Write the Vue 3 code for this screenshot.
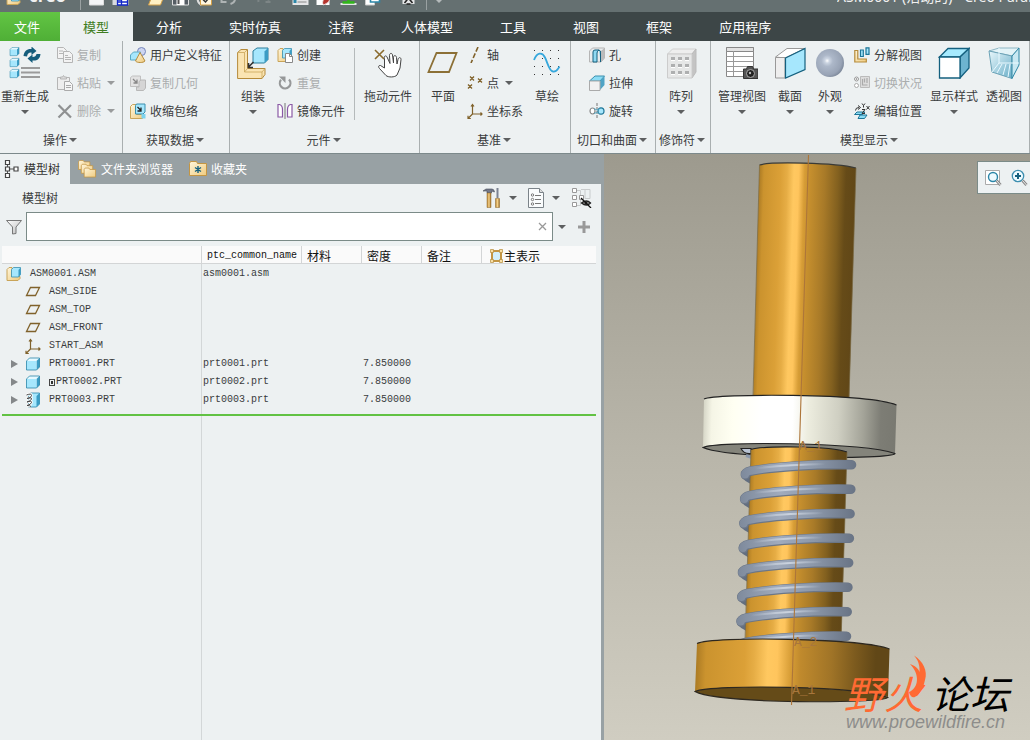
<template>
  <div class="app">
    <!-- 图标库 -->
    <svg class="defs" width="0" height="0" aria-hidden="true">
      <defs>
        <linearGradient id="tan" x1="0" y1="0" x2="1" y2="1">
          <stop offset="0" stop-color="#fff6dc" /><stop offset="1" stop-color="#efcb7f" />
        </linearGradient>
        <linearGradient id="metal" x1="0" y1="0" x2="1" y2="1">
          <stop offset="0" stop-color="#fff" /><stop offset="1" stop-color="#bbb" />
        </linearGradient>
        <linearGradient id="wood" x1="0" x2="1">
          <stop offset="0" stop-color="#b98632" /><stop offset=".5" stop-color="#f3d08b" /><stop offset="1" stop-color="#9a6a20" />
        </linearGradient>
        <radialGradient id="ball" cx=".4" cy=".42" r=".68">
          <stop offset="0" stop-color="#fff" /><stop offset=".12" stop-color="#ccd5e2" />
          <stop offset=".3" stop-color="#adb8c9" /><stop offset=".75" stop-color="#98a3b5" /><stop offset="1" stop-color="#6f7b8d" />
        </radialGradient>
        <linearGradient id="glass" x1="0" y1="0" x2="1" y2="1">
          <stop offset="0" stop-color="#e8f7fb" /><stop offset="1" stop-color="#6aaec8" />
        </linearGradient>
      </defs>

      <symbol id="cube" viewBox="0 0 16 16">
        <path d="M1.500 5l3-3h10l-3 3z" fill="#e6f9ff" /><path d="M11.500 5l3-3v9l-3 3z" fill="#3a9cc4" />
        <path d="M1.500 5h10v9h-10z" fill="#a6e7fd" />
        <path d="M1.500 5l3-3h10v9l-3 3h-10z" fill="none" stroke="#2b86a8" stroke-width=".8" />
      </symbol>
      <symbol id="asm" viewBox="0 0 16 16">
        <path d="M1 3.500L3 1.500h3v9h8v2l-2 2H1z" fill="url(#tan)" stroke="#c9a459" />
        <path d="M5.500 3.500l2-2h7v7l-2 2.500h-7z" fill="#a6e7fd" stroke="#3a8fae" stroke-width=".8" /><path d="M12.500 4l2-2.500v7l-2 2.500z" fill="#3a9cc4" />
      </symbol>
      <symbol id="plane-s" viewBox="0 0 16 16">
        <path d="M5.500 3.500H14.500L10.500 11.500H1.500z" fill="none" stroke="#80622b" stroke-width="1.300" />
      </symbol>
      <symbol id="csys" viewBox="0 0 16 16">
        <path d="M5.500 11V1.500M5.500 11H15M5.500 11L1 15.500M4 3.500l1.500-2L7 3.500M13.500 9.500l1.500 1.500-1.500 1.500M1 12.800v2.700h2.800" fill="none" stroke="#80622b" stroke-width="1.200" />
      </symbol>
      <symbol id="spring" viewBox="0 0 16 16">
        <path d="M3.500 3l2-2h9v11l-3 3h-8z" fill="#a6e7fd" stroke="#2b86a8" stroke-width=".8" /><path d="M11.500 4l3-3v11l-3 3z" fill="#3a9cc4" />
        <path d="M1.500 3q5-2 5 .500T2 6.500M2 6.500q5-1.500 4.500.5T2 10M2 10q5-1.500 4.500.5T2 13.500q3 0 4 1" fill="none" stroke="#fff" stroke-width="2.600" />
        <path d="M1.500 3q5-2 5 .500T2 6.500M2 6.500q5-1.500 4.500.5T2 10M2 10q5-1.500 4.500.5T2 13.500q3 0 4 1" fill="none" stroke="#444" />
      </symbol>

      <!-- 大图标 -->
      <symbol id="regen" viewBox="0 0 32 32">
        <use href="#cube" x="0" y="-1" width="11" height="11" /><use href="#cube" x="0" y="10" width="11" height="11" />
        <use href="#cube" x="0" y="21" width="11" height="11" />
        <path d="M12 21h19M12 25.500h19M12 30h19" stroke="#9b9b9b" stroke-width="1.800" />
        <path d="M14.500 9C15 4 18.500 1.500 22.500 2V-.5L27.500 4l-5 4V5.500c-2.500-.3-4 1-4.500 4z" fill="#155d7c" />
        <path d="M27.500 7L31.500 7c-.5 5-3.500 7-8 6.500V16L18.500 11.500l5-4V10c2.500 0 3.500-1 4-3z" fill="#155d7c" />
      </symbol>
      <symbol id="assemble" viewBox="0 0 32 32">
        <path d="M.6 5.500L4 2.500h6.500v19H28v6l-3 4H.6z" fill="#fae4b2" stroke="#b58b3b" />
        <path d="M.6 5.500H7.500v19.500h17.500v6.500M7.500 5.500l3-3M7.500 25l3-3.500M25 25l3-3.500" fill="none" stroke="#c9a459" stroke-width=".8" />
        <path d="M16 4l4-3h11v11.500l-3.500 3.500H16z" fill="#a6e7fd" stroke="#2b7d9b" /><path d="M27.500 4.500L31 1v11.500L27.500 16z" fill="#3a9cc4" />
        <path d="M16.500 15l-5 5M11.500 16v4.500h4.500" fill="none" stroke="#333" stroke-width="1.600" />
      </symbol>
      <symbol id="drag" viewBox="0 0 32 32">
        <path d="M3 3l9 9M12 3L3 12" stroke="#8a6a2d" stroke-width="1.600" />
        <path d="M12.500 21L8.500 18.500C6.500 18 6 20 7.500 21.500L14 28.500C16 30.500 23 30.500 25 28l3-7 1-8.500c0-2.500-2.500-2.500-3 0L25 17l-.5-6.500c-.3-2.500-3-2.500-3 0V16l-1-8c-.5-2.500-3-2-3 .500l.5 8-3-6.500c-1-2-3.500-1-2.500 1.500z" fill="#fff" stroke="#444" />
      </symbol>
      <symbol id="plane" viewBox="0 0 32 32"><path d="M9.500 6H29.500L22 25H1.500z" fill="none" stroke="#8c7036" stroke-width="1.800" /></symbol>
      <symbol id="sketch" viewBox="0 0 32 32">
        <path d="M3 3.500h26M3 11.500h26M3 19.500h26M3 27.500h26" stroke="#333" stroke-dasharray="1 7" />
        <path d="M3 13C6 5.500 11 4.500 14 10.500S18 24 22 24.500s4.500-2 6.500-5" fill="none" stroke="#35a7dc" stroke-width="1.800" />
      </symbol>
      <symbol id="pattern" viewBox="0 0 32 32">
        <path d="M2.500 7l5-5H31l-4 5z" fill="#eee" stroke="#d0d0d0" /><path d="M27 7l4-5v23l-4 6z" fill="#c4c4c4" stroke="#bbb" />
        <path d="M2.500 7H27v24H2.500z" fill="#e6e7e7" stroke="#ccc" />
        <path d="M6 10h4v4H6zM13 10h4v4h-4zM20 10h4v4h-4zM6 17h4v4H6zM13 17h4v4h-4zM20 17h4v4h-4zM6 24h4v4H6zM13 24h4v4h-4zM20 24h4v4h-4z" fill="#aeafb0" />
        <path d="M6 13.500h4M13 13.500h4M20 13.500h4M6 20.500h4M13 20.500h4M20 20.500h4M6 27.500h4M13 27.500h4M20 27.500h4" stroke="#fff" />
      </symbol>
      <symbol id="views" viewBox="0 0 32 32">
        <path d="M.5.5h27v29H.5z" fill="#fff" stroke="#888" /><path d="M.5.500h27v4H.5z" fill="#e3e3e3" stroke="#888" />
        <path d="M.5 9.500h27M.5 14.500h27M.5 19.500h27M.5 24.500h27M7.500 4v25" stroke="#999" />
        <path d="M17.500 22h3l1-2.500h5l1 2.500H32v9.500H17.500z" fill="#555" stroke="#333" /><circle cx="24.500" cy="26.500" r="4" fill="#222" stroke="#aaa" /><circle cx="24" cy="26" r="1.200" fill="#bbb" />
      </symbol>
      <symbol id="section" viewBox="0 0 32 32">
        <path d="M1.500 10L13 1.500H31L11 11z" fill="#fff" stroke="#999" /><path d="M1.500 10.500H11V31H1.500z" fill="#eee" stroke="#999" />
        <path d="M11.500 11L31 1.500v21L11.500 31z" fill="#a6e7fd" stroke="#14607f" stroke-width="1.200" />
      </symbol>
      <symbol id="look" viewBox="0 0 32 32"><circle cx="16" cy="16" r="14" fill="url(#ball)" /></symbol>
      <symbol id="style" viewBox="0 0 32 32">
        <path d="M1.500 10L10 1.500H31L22 10z" fill="#a6eafe" stroke="#14607f" stroke-width="1.300" /><path d="M22 10l9-8.500V21l-9 10z" fill="#6db4d0" stroke="#14607f" stroke-width="1.300" />
        <path d="M1.500 10H22v21H1.500z" fill="#fff" stroke="#14607f" stroke-width="1.300" />
      </symbol>
      <symbol id="persp" viewBox="0 0 32 32">
        <path d="M1 4L11 1H31L24 9z" fill="#e3f3f7" stroke="#8eb7c5" /><path d="M1 4l23 5v22.500L4 25z" fill="url(#glass)" stroke="#6ca3b7" />
        <path d="M24 9l7-8v17l-7 13.500z" fill="#c8e8f2" stroke="#2d86a4" />
        <path d="M11 1v15h20M11 16L4 25M14 17L9 26M18 17l-3 11M22 17l-2 13" fill="none" stroke="#e9f9ff" />
      </symbol>

      <!-- 小图标 -->
      <symbol id="copy" viewBox="0 0 16 16">
        <g fill="#f3f3f3" stroke="#b5b5b5"><path d="M.5.500h6l3 3v8h-9z" /><path d="M6.500 4.500h6l3 3v8h-9z" /></g>
        <path d="M2 4h4M2 6.500h4M8 8.500h3M8 10.500h6M8 12.500h6" stroke="#b5b5b5" />
      </symbol>
      <symbol id="paste" viewBox="0 0 16 16">
        <path d="M.5 2.500h12v12H.5z" fill="#eee" stroke="#b5b5b5" /><path d="M3.500 4V2h2l1-1.500L7.500 2h2v2z" fill="#ddd" stroke="#b5b5b5" />
        <path d="M7.500 6.500h5l3 3v6h-8z" fill="#f6f6f6" stroke="#aaa" /><path d="M9 10.500h5M9 12.500h5" stroke="#aaa" />
      </symbol>
      <symbol id="del" viewBox="0 0 16 16"><path d="M1.500 2L14 14.500M14 2L1.500 14.500" stroke="#8f9192" stroke-width="2.200" /></symbol>
      <symbol id="udf" viewBox="0 0 16 16">
        <circle cx="11.500" cy="4.500" r="4" fill="#cdd5f2" stroke="#7686bb" /><path d="M.5 8l3-3h7v6l-2 2H.5z" fill="#a6e7fd" stroke="#5ba9c3" />
        <path d="M10 5.500L5.500 14c1.500 2 8 2 9.500 0z" fill="url(#tan)" stroke="#b58b3b" />
      </symbol>
      <symbol id="geom" viewBox="0 0 16 16">
        <path d="M.5 2.500l2-1.500h8v8L9 11.500H.5z" fill="#e2e2e2" stroke="#c0c0c0" /><path d="M9 6.500l2-1.500h4.500v8l-2 2.500H6.500V12H9z" fill="#d5d5d5" stroke="#b8b8b8" />
        <path d="M3 4l4 4M7 4.500V8H3.500" fill="none" stroke="#888" stroke-width="1.300" />
      </symbol>
      <symbol id="shrink" viewBox="0 0 16 16">
        <path d="M.5 3.500l2-2h4v10h8v2l-2 2H.5z" fill="url(#tan)" stroke="#c9a459" /><path d="M5.500 2.500l1-1.500h8.500v8l-2 2H5.500z" fill="#a6e7fd" stroke="#3a8fae" />
        <path d="M7.500 4l3.500 3.500M11 4.500v3.500H7.500" fill="none" stroke="#222" stroke-width="1.300" /><path d="M11.500 11h4v4.500h-4z" fill="#7cd3ee" />
      </symbol>
      <symbol id="create" viewBox="0 0 16 16">
        <use href="#asm" /><path d="M8.500 6.500h4l3 3v6h-7z" fill="#fff" stroke="#888" /><path d="M12.500 6.500v3h3" fill="none" stroke="#888" />
      </symbol>
      <symbol id="repeat" viewBox="0 0 16 16">
        <path d="M12 4.500a5.300 5.300 0 1 1-8 .3" fill="none" stroke="#969899" stroke-width="2.200" /><path d="M2 1.500h6.500V8z" fill="#969899" />
      </symbol>
      <symbol id="mirror" viewBox="0 0 16 16">
        <path d="M1 1.500h1.500q3 1 3 5v7.500H1zM15 1.500h-1.500q-3 1-3 5v7.500H15z" fill="#fff" stroke="#8a5aa5" stroke-width="1.200" /><path d="M8 0v16" stroke="#777" />
      </symbol>
      <symbol id="axis" viewBox="0 0 16 16"><path d="M11 0L4 16" stroke="#80622b" stroke-width="1.600" stroke-dasharray="5 2" /></symbol>
      <symbol id="points" viewBox="0 0 16 16"><path d="M3 1.500l4 4M7 1.500l-4 4M11 3.500l4 4M15 3.500l-4 4M1 9.500l4 4M5 9.500l-4 4" stroke="#80622b" stroke-width="1.300" /></symbol>
      <symbol id="hole" viewBox="0 0 16 16">
        <path d="M.5 4l3-3h12v10l-3.500 4H.5z" fill="#e8ecee" stroke="#b5b5b5" /><path d="M12 4l3.500-3v10L12 15z" fill="#bbb" />
        <path d="M4 15V5q0-2 2-2h4q-2 1-2 3v9zM10 3q2 0 1.500 4v8" fill="#8fd9f2" stroke="#14607f" />
      </symbol>
      <symbol id="extrude" viewBox="0 0 16 16">
        <path d="M.5 6L6 1h9.500L11 6z" fill="#8bdcf5" stroke="#3a8fae" /><path d="M11 6l4.500-5v9L11 15z" fill="#4ea3c5" /><path d="M.5 6H11v9.500H.5z" fill="#f1f1f1" stroke="#aaa" />
      </symbol>
      <symbol id="revolve" viewBox="0 0 16 16">
        <path d="M8 0v16" stroke="#777" stroke-dasharray="3 1" /><ellipse cx="3.500" cy="8" rx="2.500" ry="3" fill="#fff" stroke="#888" stroke-width="1.200" />
        <ellipse cx="12" cy="8" rx="3" ry="3.200" fill="#a6e7fd" stroke="#1d7597" stroke-width="1.200" /><path d="M5 5.500q3 3 5.500 0M5 10.500q3-2 5.500 0" fill="none" stroke="#5ba9c3" />
      </symbol>
      <symbol id="explode" viewBox="0 0 16 16">
        <path d="M.8 3.500h3v8.500h8.500v3H.8z" fill="url(#tan)" stroke="#b58b3b" stroke-width="1.200" /><path d="M6.500 3h2.800v6.500H6.500zM12 .8h3v6.500h-3z" fill="#a6e7fd" stroke="#1d7597" stroke-width="1.200" />
      </symbol>
      <symbol id="switch" viewBox="0 0 16 16">
        <circle cx="2.500" cy="4" r="2" fill="#fff" stroke="#999" /><circle cx="2.500" cy="4" r=".8" fill="#777" /><circle cx="2.500" cy="10.500" r="2" fill="#fff" stroke="#aaa" />
        <path d="M6.500 1.500h9v11h-9z" fill="#ddd" stroke="#bbb" /><path d="M8.500 4v6h5M10.500 3.500v4M13 3v5" fill="none" stroke="#aaa" stroke-width="1.200" />
      </symbol>
      <symbol id="editpos" viewBox="0 0 16 16">
        <path d="M.5 11.500L3 9h8l-2.500 2.500zM4 15.500L6 12h7l-2.500 3.500z" fill="#8bdcf5" stroke="#1d7597" />
        <path d="M1.500 7.500Q1.500 4.500 5 4.500M4 2.500L6.500 4.500 4 6.500M8 .5l1.500 2L11 .5M9.500 2.500v2M12.500 3l3 3.500M15.500 3l-3 3.500M8 6.500h3l-3 4h3" fill="none" stroke="#333" />
      </symbol>

      <!-- 导航区 -->
      <symbol id="tree" viewBox="0 0 16 20">
        <path d="M3.500 5v10M5 10h6" stroke="#555" /><path d="M1.500 1.500h4v4h-4zM1.500 8h4v4h-4zM1.500 14.500h4v4h-4zM10 8h4v4h-4z" fill="#fff" stroke="#444" stroke-width="1.200" />
      </symbol>
      <symbol id="folders" viewBox="0 0 20 20">
        <g fill="url(#tan)" stroke="#c39543" stroke-width=".8"><path d="M.5 2.500l1-1.500h4l1 1.500h6v8H.5z" /><path d="M3.500 6.500l1-1.500h4l1 1.500h6v8h-12z" /><path d="M6.500 10.500l1-1.500h4l1 1.500h6v8h-12z" /></g>
      </symbol>
      <symbol id="fav" viewBox="0 0 18 18">
        <path d="M.5 3.500l1-2h6l1 2h9v12H.5z" fill="url(#tan)" stroke="#c39543" /><path d="M9 6v7M6 7.500l6 4M12 7.500l-6 4" stroke="#14607f" stroke-width="1.400" />
      </symbol>
      <symbol id="tools" viewBox="0 0 18 20">
        <path d="M0 3l3-2h6q2 0 2.500 3l-3-1v2H4V3z" fill="#74798a" stroke="#444a58" stroke-width=".6" /><path d="M4 5h4v14.500H4z" fill="url(#wood)" stroke="#8d6528" stroke-width=".5" />
        <path d="M14.500 0v10" stroke="#7c8393" stroke-width="2" /><path d="M12.500 10.500h4v9h-4z" fill="url(#wood)" stroke="#8d6528" stroke-width=".5" />
      </symbol>
      <symbol id="list" viewBox="0 0 16 20">
        <path d="M.5.500h11l4 4v15H.5z" fill="#fafcfd" stroke="#7b8389" /><path d="M11.500.500v4h4" fill="#ddd" stroke="#7b8389" />
        <g fill="none" stroke="#777"><circle cx="4.500" cy="7" r="1.200" /><circle cx="4.500" cy="11.500" r="1.200" /><circle cx="4.500" cy="16" r="1.200" /><path d="M7 7.500h6M7 11.500h6M7 15.500h6" /></g>
      </symbol>
      <symbol id="treehide" viewBox="0 0 21 20">
        <path d="M6 2.500h3.500v15H6M10 1.500h4v9h5v-9h-5" fill="none" stroke="#c8cbcc" /><path d="M1.500.500h4v4h-4zM1.500 7.500h4v4h-4zM1.500 14.500h4v4h-4zM8.500 7.500h4v4h-4z" fill="#fff" stroke="#999" />
        <path d="M10.500 15q5-4 9 0-4 4-9 0z" fill="#aaa" stroke="#222" stroke-width="1.300" /><circle cx="15" cy="15" r="1.500" fill="#222" /><path d="M10 10l10 10" stroke="#111" stroke-width="1.300" />
      </symbol>
      <symbol id="funnel" viewBox="0 0 16 16"><path d="M.5 1.500h15L10 8v6.500L6.500 15V8z" fill="url(#metal)" stroke="#777" /></symbol>
      <symbol id="rep" viewBox="0 0 13 14">
        <path d="M2 2h9v10H2z" fill="#d3effa" stroke="#c39543" stroke-width="2" /><path d="M.5.500h3v3h-3zM9.500.500h3v3h-3zM.5 10.500h3v3h-3zM9.500 10.500h3v3h-3z" fill="#f8dfa5" stroke="#b58b3b" stroke-width=".7" />
      </symbol>
      <symbol id="refit" viewBox="0 0 18 18">
        <path d="M.5 1.500h14v14H.5z" fill="#fff" stroke="#aaa" /><circle cx="8" cy="8" r="4.500" fill="#eefaff" stroke="#2b86a8" stroke-width="1.400" />
        <path d="M11.500 11.500l4 4.500" stroke="#888" stroke-width="2.800" /><path d="M11.500 11.500l4 4.500" stroke="#eee" />
      </symbol>
      <symbol id="zoomin" viewBox="0 0 18 18">
        <circle cx="7" cy="7" r="5.700" fill="#eefaff" stroke="#3d8fb0" stroke-width="1.300" /><path d="M7 4v6M4 7h6" stroke="#14607f" stroke-width="2" />
        <path d="M11.500 11.500l4 4.500" stroke="#888" stroke-width="2.800" /><path d="M11.500 11.500l4 4.500" stroke="#eee" />
      </symbol>

      <!-- 快速访问工具栏 -->
      <symbol id="q-new" viewBox="0 0 16 16"><path d="M1 0h14v15H1z" fill="#f4f6f7" stroke="#ddd" /></symbol>
      <symbol id="q-win" viewBox="0 0 16 16"><path d="M0 0h16v15H0z" fill="#d8dadd" /><path d="M5 15v-5h4V8h6v7zM9 10v5M5 12h10" fill="#fff" stroke="#1227c9" stroke-width="1.300" /></symbol>
      <symbol id="q-open" viewBox="0 0 16 16"><path d="M0 15L4 5h12l-4 10z" fill="#fff0c4" stroke="#d29f48" /></symbol>
      <symbol id="q-save" viewBox="0 0 16 16"><path d="M0 0h16v15H0z" fill="#555d64" stroke="#ddd" /><path d="M4 8h8v7H4z" fill="#fff" /><path d="M6 9v5" stroke="#555" stroke-width="2" /></symbol>
      <symbol id="q-check" viewBox="0 0 16 16"><path d="M1 8q0 5 4 7" fill="none" stroke="#ddd" stroke-width="2" /><path d="M4 2h11v13H4z" fill="#fff6df" stroke="#d29f48" /><path d="M6 9l3 3 5-6" fill="none" stroke="#333" stroke-width="1.500" /></symbol>
      <symbol id="q-undo" viewBox="0 0 16 16"><path d="M1 8v4h5M10 14q6-2 4-8" fill="none" stroke="#aeb3b4" stroke-width="2" /></symbol>
      <symbol id="q-redo" viewBox="0 0 16 16"><path d="M2 12q-1-6 6-4l5 2M9 12h5" fill="none" stroke="#7d8586" stroke-width="2" /></symbol>
      <symbol id="q-list" viewBox="0 0 16 16"><path d="M0 2h16v13H0z" fill="#e4e5e6" /><path d="M5 9h9M5 12h9" stroke="#888" /><path d="M1 10h3v3H1z" fill="#2b86a8" /></symbol>
      <symbol id="q-erase" viewBox="0 0 16 16"><path d="M0 2h13v13H0z" fill="#fff" /><path d="M6 13q0-5 8-8l1 2q-3 7-8 8z" fill="#b5342d" stroke="#eee" stroke-width=".8" /></symbol>
      <symbol id="q-green" viewBox="0 0 16 16"><path d="M3 6h10v4H3zM0 13h16v2H0z" fill="#e4e5e6" /><path d="M2 12.500h12M8 8v4" stroke="#2fb619" stroke-width="2.500" /></symbol>
      <symbol id="q-wins" viewBox="0 0 16 16"><path d="M1 7h9v8H1z" fill="#fff" stroke="#ccc" /><path d="M6 2h9v10H6z" fill="#fff" stroke="#2b86a8" stroke-width="1.600" /></symbol>
      <symbol id="q-close" viewBox="0 0 16 16"><path d="M2 2h12v12H2z" fill="#e4e5e6" /><path d="M4 13l4-5 4 5M6 14h4" fill="none" stroke="#222" stroke-width="1.600" /></symbol>
    </svg>

    <header class="titlebar">
      <svg class="logo" width="16" height="16"><use href="#asm" /></svg>
      <strong class="brand">creo</strong>
      <i class="bar-line"></i>
      <button v-for="q in quick" :key="q.icon" type="button" :class="['quick', q.gap]" :aria-label="q.name">
        <svg width="17" height="16"><use :href="'#' + q.icon" /></svg>
      </button>
      <i class="bar-line last"></i>
      <i class="arrow light"></i>
      <span class="doc-title">ASM0001 (活动的) - Creo Parametric</span>
    </header>

    <nav class="tabs">
      <button v-for="(t, i) in tabs" :key="t" type="button" :class="{ file: i === 0, active: t === activeTab }" @click="i && (activeTab = t)">{{ t }}</button>
    </nav>

    <section class="ribbon">
      <div v-for="g in groups" :key="g.title" :class="['group', g.cls]">
        <div class="group-body">
          <template v-for="(it, i) in g.items" :key="i">
            <i v-if="it.sep" class="inner-sep"></i>
            <div v-else-if="it.col" class="col">
              <button v-for="s in it.col" :key="s.label" type="button" class="small" :disabled="s.off">
                <svg width="16" height="16"><use :href="'#' + s.icon" /></svg>
                <span>{{ s.label }}</span>
                <i v-if="s.arrow" class="arrow"></i>
              </button>
            </div>
            <button v-else type="button" class="big">
              <svg width="32" height="32"><use :href="'#' + it.icon" /></svg>
              <span>{{ it.label }}</span>
              <i v-if="it.arrow" class="arrow"></i>
            </button>
          </template>
        </div>
        <button type="button" class="group-title">{{ g.title }}<i class="arrow"></i></button>
      </div>
    </section>

    <main class="work">
      <aside class="navigator">
        <div class="nav-tabs">
          <button type="button" class="on"><svg width="16" height="20"><use href="#tree" /></svg>模型树</button>
          <button type="button" class="mid"><svg width="19" height="20"><use href="#folders" /></svg>文件夹浏览器</button>
          <button type="button" class="end"><svg width="18" height="18"><use href="#fav" /></svg>收藏夹</button>
        </div>
        <div class="pane">
          <div class="tree-head">
            <h2>模型树</h2>
            <button type="button" aria-label="设置"><svg width="18" height="20"><use href="#tools" /></svg><i class="arrow"></i></button>
            <button type="button" aria-label="显示"><svg width="16" height="20"><use href="#list" /></svg><i class="arrow"></i></button>
            <button type="button" aria-label="隐藏"><svg width="21" height="20"><use href="#treehide" /></svg></button>
          </div>
          <div class="filter">
            <svg width="16" height="16"><use href="#funnel" /></svg>
            <div class="search">
              <input v-model="keyword" type="text" aria-label="过滤" />
              <button type="button" aria-label="清除" @click="keyword = ''">
                <svg width="9" height="9" viewBox="0 0 9 9"><path d="M1 1l7 7M8 1L1 8" stroke="#999" stroke-width="1.300" /></svg>
              </button>
            </div>
            <button type="button" class="drop" aria-label="选项"><i class="arrow"></i></button>
            <button type="button" class="plus" aria-label="添加">
              <svg width="12" height="12" viewBox="0 0 12 12"><path d="M6 0v12M0 6h12" stroke="#999" stroke-width="3" /></svg>
            </button>
          </div>
          <div class="tree-area">
            <table>
              <colgroup><col class="c-name" /><col class="c-common" /><col class="c-s" /><col class="c-s" /><col class="c-s" /><col /></colgroup>
              <thead>
                <tr>
                  <th></th>
                  <th class="mono">ptc_common_name</th>
                  <th>材料</th>
                  <th>密度</th>
                  <th>备注</th>
                  <th><span class="rep"><svg width="13" height="14"><use href="#rep" /></svg>主表示</span></th>
                </tr>
              </thead>
              <tbody>
                <tr v-for="n in nodes" :key="n.name">
                  <td>
                    <div class="node">
                      <span v-if="!n.root" class="toggle"><i v-if="n.common"></i></span>
                      <svg width="16" height="16"><use :href="'#' + n.icon" /></svg>
                      <i v-if="n.mark" class="mark"></i>{{ n.name }}
                    </div>
                  </td>
                  <td>{{ n.common }}</td>
                  <td></td>
                  <td>{{ n.density }}</td>
                  <td></td>
                  <td></td>
                </tr>
              </tbody>
            </table>
            <div class="insert-line"></div>
          </div>
        </div>
      </aside>

      <section class="viewport">
        <svg class="scene" viewBox="604 154 426 586" preserveAspectRatio="xMidYMid meet">
          <defs>
            <linearGradient id="shaft" gradientUnits="userSpaceOnUse" x1="759.500" y1="165" x2="856" y2="168">
              <stop offset="0" stop-color="#ac7b24" /><stop offset=".05" stop-color="#cb932e" /><stop offset=".22" stop-color="#dba037" />
              <stop offset=".29" stop-color="#e6ad45" /><stop offset=".36" stop-color="#ffc860" /><stop offset=".41" stop-color="#ffc55d" />
              <stop offset=".47" stop-color="#d79d36" /><stop offset=".52" stop-color="#c7902e" /><stop offset=".68" stop-color="#a87a28" />
              <stop offset=".82" stop-color="#82601f" /><stop offset=".9" stop-color="#664b18" /><stop offset="1" stop-color="#614717" />
            </linearGradient>
            <linearGradient id="base" gradientUnits="userSpaceOnUse" x1="696" y1="666" x2="889" y2="672">
              <stop offset="0" stop-color="#ac7b24" /><stop offset=".05" stop-color="#cb932e" /><stop offset=".25" stop-color="#dba037" />
              <stop offset=".3" stop-color="#e6ad45" /><stop offset=".37" stop-color="#ffc860" /><stop offset=".42" stop-color="#ffc55d" />
              <stop offset=".49" stop-color="#d79d36" /><stop offset=".54" stop-color="#c08a2d" /><stop offset=".7" stop-color="#a07427" />
              <stop offset=".82" stop-color="#7d5b1e" /><stop offset=".93" stop-color="#614717" /><stop offset="1" stop-color="#614717" />
            </linearGradient>
            <linearGradient id="washer" gradientUnits="userSpaceOnUse" x1="704" y1="420" x2="896" y2="426">
              <stop offset="0" stop-color="#d8d8c9" /><stop offset=".04" stop-color="#f5f5e6" /><stop offset=".15" stop-color="#fffff2" />
              <stop offset=".3" stop-color="#fff" /><stop offset=".46" stop-color="#fff" /><stop offset=".54" stop-color="#ededdf" />
              <stop offset=".7" stop-color="#cfcfc2" /><stop offset=".83" stop-color="#a3a398" /><stop offset=".92" stop-color="#7d7d75" /><stop offset="1" stop-color="#797971" />
            </linearGradient>
            <linearGradient id="wire" gradientUnits="userSpaceOnUse" x1="740" y1="0" x2="857" y2="0">
              <stop offset="0" stop-color="#7d899b" /><stop offset=".35" stop-color="#a0abbd" /><stop offset=".65" stop-color="#8c98aa" /><stop offset="1" stop-color="#687384" />
            </linearGradient>
            <linearGradient id="shine" gradientUnits="userSpaceOnUse" x1="755" y1="0" x2="825" y2="0">
              <stop offset="0" stop-color="#cfd7e2" stop-opacity="0" /><stop offset=".5" stop-color="#cbd3de" /><stop offset="1" stop-color="#cfd7e2" stop-opacity="0" />
            </linearGradient>
          </defs>

          <!-- 螺杆上段 -->
          <path d="M759.500 165C770 161.500 835 162.500 856 168L849 404H753z" fill="url(#shaft)" />
          <path d="M759.500 165C770 161.500 835 162.500 856 168" fill="none" stroke="#3a3a36" stroke-width="1.200" />
          <path d="M759.500 165L753 396M856 168l-7 230" stroke="#7a6a45" stroke-width=".7" />

          <!-- 垫圈 -->
          <path d="M704 399C715 393.500 865 393 896.500 405L895 454C860 442 715 441 703 447.500z" fill="url(#washer)" />
          <path d="M704 399C715 393.500 865 393 896.500 405" fill="none" stroke="#222" stroke-width="1.200" />
          <path d="M703 447.500C715 441 860 442 895 453.500C893 460 730 459 703 447.500z" fill="#84847b" stroke="#222" stroke-width="1.100" />
          <path d="M741 448.500h10v5q-7 1-10-5z" fill="#b9c3d2" stroke="#222" stroke-width="1.100" />
          <path d="M746 455.500l6 2" stroke="#8c98aa" stroke-width="3" />

          <!-- 弹簧后侧 -->
          <g v-for="c in 7" :key="'b' + c" :transform="`translate(${(c - 1) * -0.72} ${(c - 1) * 24.5})`">
            <path d="M745.500 474Q746 478 758 482" fill="none" stroke="#626e80" stroke-width="9" stroke-linecap="round" />
          </g>

          <!-- 螺杆下段 -->
          <path d="M751 449.500C765 445.500 830 446 847 452L841 648H745z" fill="url(#shaft)" />
          <path d="M751 449.500C765 445.500 830 446 847 452" fill="none" stroke="#222" stroke-width="1.100" />
          <path d="M751 449.500L745 640M847 452l-6 190" stroke="#7a6a45" stroke-width=".7" />

          <!-- 弹簧前侧 -->
          <g v-for="c in 8" :key="'f' + c" :transform="`translate(${(c - 1) * -0.72} ${(c - 1) * 24.5})`" fill="none" stroke-linecap="round">
            <path d="M851.500 464.800C815 464 772 467 751 471Q745 472.500 745.500 475" stroke="#6b7687" stroke-width="9.600" />
            <path d="M851.500 464.500C815 463.700 772 466.700 751 470.700Q745 472.200 745 474.500" stroke="url(#wire)" stroke-width="8" />
            <path d="M825 464Q785 464.500 755 468.500" stroke="url(#shine)" stroke-width="2" />
          </g>

          <!-- 底座 -->
          <path d="M697 643.500C712 636 862 638 889.500 649L888 697C860 686 712 684 695 691.500z" fill="url(#base)" />
          <path d="M697 643.500C712 636 862 638 889.500 649" fill="none" stroke="#2d2820" stroke-width="1.200" />
          <path d="M695 691.500C712 684 860 686 888 697.500C882 704 718 704 695 691.500z" fill="#654b18" stroke="#2d2820" stroke-width="1.100" />

          <!-- 基准轴 -->
          <path d="M808.500 155L791.500 705" stroke="#ad763a" stroke-width="1.100" />
          <g class="axis-tag">
            <text x="799" y="450">A_1</text>
            <text x="794" y="646">A_2</text>
            <text x="792" y="694">A_1</text>
          </g>

          <!-- 论坛标识 -->
          <g class="mark-text">
            <text x="844" y="709" fill="#ff6a33">野</text>
            <text x="884" y="709" fill="#ff6a33">火</text>
            <text x="931" y="709" fill="#000">论坛</text>
          </g>
          <path d="M914 655.500C923 661 928 671 925 680C923 689 919 694 915 697C912 698 910 696 909 692C919 688 920 674 910 664C915 666 918 668 919.500 672C920 665 918 660 914 655.500z" fill="#ff6a33" />
          <text class="mark-url" x="846" y="728">www.proewildfire.cn</text>
        </svg>
        <div class="view-bar">
          <button type="button" aria-label="重新调整"><svg width="18" height="18"><use href="#refit" /></svg></button>
          <button type="button" aria-label="放大"><svg width="18" height="18"><use href="#zoomin" /></svg></button>
        </div>
      </section>
    </main>
  </div>
</template>

<script setup>
import { ref } from 'vue'

const tabs = ['文件', '模型', '分析', '实时仿真', '注释', '人体模型', '工具', '视图', '框架', '应用程序']
const activeTab = ref('模型')
const keyword = ref('')

const quick = [
  { icon: 'q-new', name: '新建' },
  { icon: 'q-win', name: '窗口' },
  { icon: 'q-open', name: '打开', gap: 'gap' },
  { icon: 'q-save', name: '保存' },
  { icon: 'q-check', name: '检查' },
  { icon: 'q-undo', name: '撤消' },
  { icon: 'q-redo', name: '重做', gap: 'gap' },
  { icon: 'q-list', name: '列表', gap: 'gap' },
  { icon: 'q-erase', name: '拭除' },
  { icon: 'q-green', name: '重新生成' },
  { icon: 'q-wins', name: '切换窗口' },
  { icon: 'q-close', name: '关闭', gap: 'gap' },
]

// 功能区分组: big 为大按钮, col 为一列小按钮, sep 为分隔线
const groups = [
  {
    title: '操作',
    cls: 'g-op',
    items: [
      { icon: 'regen', label: '重新生成', arrow: true },
      {
        col: [
          { icon: 'copy', label: '复制', off: true },
          { icon: 'paste', label: '粘贴', off: true, arrow: true },
          { icon: 'del', label: '删除', off: true, arrow: true },
        ],
      },
    ],
  },
  {
    title: '获取数据',
    items: [
      {
        col: [
          { icon: 'udf', label: '用户定义特征' },
          { icon: 'geom', label: '复制几何', off: true },
          { icon: 'shrink', label: '收缩包络' },
        ],
      },
    ],
  },
  {
    title: '元件',
    items: [
      { icon: 'assemble', label: '组装', arrow: true },
      {
        col: [
          { icon: 'create', label: '创建' },
          { icon: 'repeat', label: '重复', off: true },
          { icon: 'mirror', label: '镜像元件' },
        ],
      },
      { sep: true },
      { icon: 'drag', label: '拖动元件' },
    ],
  },
  {
    title: '基准',
    items: [
      { icon: 'plane', label: '平面' },
      {
        col: [
          { icon: 'axis', label: '轴' },
          { icon: 'points', label: '点', arrow: true },
          { icon: 'csys', label: '坐标系' },
        ],
      },
      { icon: 'sketch', label: '草绘' },
    ],
  },
  {
    title: '切口和曲面',
    cls: 'g-cut',
    items: [
      {
        col: [
          { icon: 'hole', label: '孔' },
          { icon: 'extrude', label: '拉伸' },
          { icon: 'revolve', label: '旋转' },
        ],
      },
    ],
  },
  { title: '修饰符', cls: 'g-mod', items: [{ icon: 'pattern', label: '阵列', arrow: true }] },
  {
    title: '模型显示',
    items: [
      { icon: 'views', label: '管理视图', arrow: true },
      { icon: 'section', label: '截面', arrow: true },
      { icon: 'look', label: '外观', arrow: true },
      {
        col: [
          { icon: 'explode', label: '分解视图' },
          { icon: 'switch', label: '切换状况', off: true },
          { icon: 'editpos', label: '编辑位置' },
        ],
      },
      { icon: 'style', label: '显示样式', arrow: true },
      { icon: 'persp', label: '透视图' },
    ],
  },
]

const nodes = [
  { name: 'ASM0001.ASM', icon: 'asm', common: 'asm0001.asm', root: true },
  { name: 'ASM_SIDE', icon: 'plane-s' },
  { name: 'ASM_TOP', icon: 'plane-s' },
  { name: 'ASM_FRONT', icon: 'plane-s' },
  { name: 'START_ASM', icon: 'csys' },
  { name: 'PRT0001.PRT', icon: 'cube', common: 'prt0001.prt', density: '7.850000' },
  { name: 'PRT0002.PRT', icon: 'cube', common: 'prt0002.prt', density: '7.850000', mark: true },
  { name: 'PRT0003.PRT', icon: 'spring', common: 'prt0003.prt', density: '7.850000' },
]
</script>

<style>
body {
  overflow: hidden;
}
</style>

<style scoped>
.app {
  height: 100vh;
  display: flex;
  flex-direction: column;
  font-family: "Noto Sans CJK SC", sans-serif;
  font-size: 12px;
  line-height: 16px;
  color: #3a3c3d;
  background: #edf1f2;
}
.app * {
  box-sizing: border-box;
}
.defs {
  position: absolute;
}
button {
  border: 0;
  padding: 0;
  margin: 0;
  background: none;
  font: inherit;
  color: inherit;
  white-space: nowrap;
}
svg {
  flex: none;
  display: block;
}
.arrow {
  flex: none;
  border: 4px solid transparent;
  border-top-color: #5d5f60;
  border-bottom: 0;
}
.arrow.light {
  border-top-color: #b5babb;
  margin: 0 5px 3px;
}

/* 标题栏 */
.titlebar {
  flex: none;
  display: flex;
  align-items: flex-end;
  height: 12px;
  padding: 0 0 6px 6px;
  overflow: hidden;
  background: #657071;
  color: #f0f0f0;
}
.brand {
  width: 51px;
  padding-left: 7px;
  font: bold 17px/20px "Open Sans", sans-serif;
}
.bar-line {
  flex: none;
  width: 1px;
  height: 20px;
  margin: 0 3px -4px 7px;
  background: #9aa1a2;
}
.bar-line.last {
  margin-left: 6px;
}
.quick {
  flex: none;
  width: 24px;
  padding-left: 4px;
}
.quick.gap {
  margin-left: 12px;
}
.doc-title {
  flex: 0 0 193px;
  min-width: 0;
  margin-left: auto;
  overflow: hidden;
  white-space: nowrap;
  font: 14px/18px "Noto Sans", "Noto Sans CJK SC", sans-serif;
}

/* 选项卡 */
.tabs {
  flex: none;
  display: flex;
  height: 29px;
  background: #3d4647;
  color: #fff;
  font-size: 13px;
}
.tabs button {
  padding: 0 24px 0 23px;
}
.tabs .file {
  width: 60px;
  padding: 0 20px 0 14px;
  background: linear-gradient(#62c544, #4faf36);
}
.tabs .active {
  background: #edf1f2;
  color: #3f7d22;
}

/* 功能区 */
.ribbon {
  flex: none;
  display: grid;
  grid-template-columns: 123fr 107fr 190fr 151fr 85fr 55fr 319fr;
  border-bottom: 1px solid #7c898b;
}
.group {
  display: flex;
  flex-direction: column;
  min-width: 0;
  border-right: 1px solid #a9afb0;
}
.group-body {
  display: flex;
  gap: 8px;
  height: 84px;
  padding-left: 7px;
}
.g-op .group-body {
  padding-left: 1px;
}
.g-cut .group-body {
  padding-left: 18px;
}
.g-mod .group-body {
  padding-left: 9px;
}
.big {
  display: flex;
  flex-direction: column;
  align-items: center;
  min-width: 32px;
  padding-top: 6px;
}
.big span {
  margin: 9px 0 6px;
}
.col {
  display: flex;
  flex-direction: column;
}
.small {
  display: flex;
  align-items: center;
  gap: 4px;
  height: 28px;
}
.small .arrow {
  margin-left: 2px;
}
.small:disabled {
  color: #aaadae;
}
.small:disabled .arrow {
  border-top-color: #999b9c;
}
.inner-sep {
  width: 1px;
  margin: 7px 1px 5px;
  background: #b5babb;
}
.group-title {
  display: flex;
  align-items: center;
  justify-content: center;
  gap: 2px;
  height: 28px;
  padding: 2px 2px 0 0;
}

/* 工作区 */
.work {
  flex: 1;
  min-height: 0;
  display: grid;
  grid-template-columns: minmax(0, 604fr) minmax(0, 426fr);
}
.navigator {
  display: flex;
  flex-direction: column;
  padding-right: 3px;
  background: #98a1a4;
}
.nav-tabs {
  display: flex;
  height: 30px;
  color: #fff;
}
.nav-tabs button {
  display: flex;
  align-items: center;
  gap: 4px;
  padding: 0 8px;
}
.nav-tabs .on {
  width: 70px;
  padding: 0 0 0 4px;
  background: #edf1f2;
  color: #333;
}
.pane {
  flex: 1;
  display: flex;
  flex-direction: column;
  background: #edf1f2;
}
.tree-head {
  display: flex;
  align-items: center;
  gap: 11px;
  height: 28px;
  padding: 0 9px 0 22px;
}
.tree-head h2 {
  flex: 1;
  margin: 0;
  font-size: 12px;
  font-weight: 400;
}
.tree-head button {
  display: flex;
  align-items: center;
  gap: 8px;
}
.filter {
  display: flex;
  align-items: center;
  height: 29px;
  padding: 0 11px 0 6px;
}
.search {
  flex: 1;
  display: flex;
  align-items: center;
  height: 29px;
  margin-left: 4px;
  padding-right: 5px;
  border: 1px solid #7b8b88;
  background: #fff;
}
.search input {
  flex: 1;
  min-width: 0;
  height: 24px;
  border: 0;
  outline: 0;
  padding: 0 4px;
  background: none;
  font: inherit;
}
.drop {
  padding: 0 12px 0 5px;
}
.drop .arrow {
  display: block;
}
.tree-area {
  flex: 1;
  margin: 5px 5px 0 2px;
  background: linear-gradient(#d3d7d8, #d3d7d8) 199px 0 / 1px 100% no-repeat;
}
table {
  width: 100%;
  table-layout: fixed;
  border-collapse: separate;
  border-spacing: 0;
}
.c-name {
  width: 200px;
}
.c-common {
  width: 100px;
}
.c-s {
  width: 60px;
}
th {
  height: 18px;
  padding: 2px 0 0 5px;
  overflow: hidden;
  white-space: nowrap;
  text-align: left;
  font-weight: 400;
  line-height: 15px;
  color: #111;
  background: #fafafa;
  border-right: 1px solid #d3d5d6;
  border-bottom: 1px solid #d3d5d6;
}
th:last-child {
  border-right: 0;
}
.rep {
  display: flex;
  align-items: center;
  gap: 1px;
  padding-left: 3px;
}
td,
th.mono {
  font-family: "Liberation Mono", monospace;
  font-size: 10px;
}
td {
  height: 18px;
  padding: 2px 0 0 1px;
  white-space: nowrap;
}
.node {
  display: flex;
  align-items: center;
  padding-left: 3px;
}
.node svg {
  margin-right: 8px;
}
.toggle {
  width: 19px;
  padding-left: 5px;
}
.toggle i {
  display: block;
  width: 0;
  border: 4px solid transparent;
  border-left: 7px solid #85888a;
  border-right: 0;
}
.mark {
  width: 6px;
  height: 7px;
  margin-right: 1px;
  border: 1px solid #444;
  background: radial-gradient(#333 1px, transparent 1px);
}
.insert-line {
  height: 2px;
  margin-top: 6px;
  background: #62c244;
}

/* 图形窗口 */
.viewport {
  position: relative;
  min-height: 0;
  background: linear-gradient(#9d9a8e, #b8b5a9 50%, #d0cdc1);
}
.scene {
  width: 100%;
  height: 100%;
}
.axis-tag {
  font: 13px "Liberation Mono", monospace;
  fill: #a8763c;
}
.mark-text {
  font: italic 400 39px "Noto Sans CJK SC", sans-serif;
}
.mark-url {
  font: italic 18px "Liberation Sans", sans-serif;
  fill: #8d8d8b;
}
.view-bar {
  position: absolute;
  top: 7px;
  right: 0;
  display: flex;
  gap: 8px;
  height: 33px;
  padding: 0 1px 0 7px;
  align-items: center;
  border: 1px solid #7b8b88;
  border-right: 0;
  background: #edf1f2;
}
</style>
